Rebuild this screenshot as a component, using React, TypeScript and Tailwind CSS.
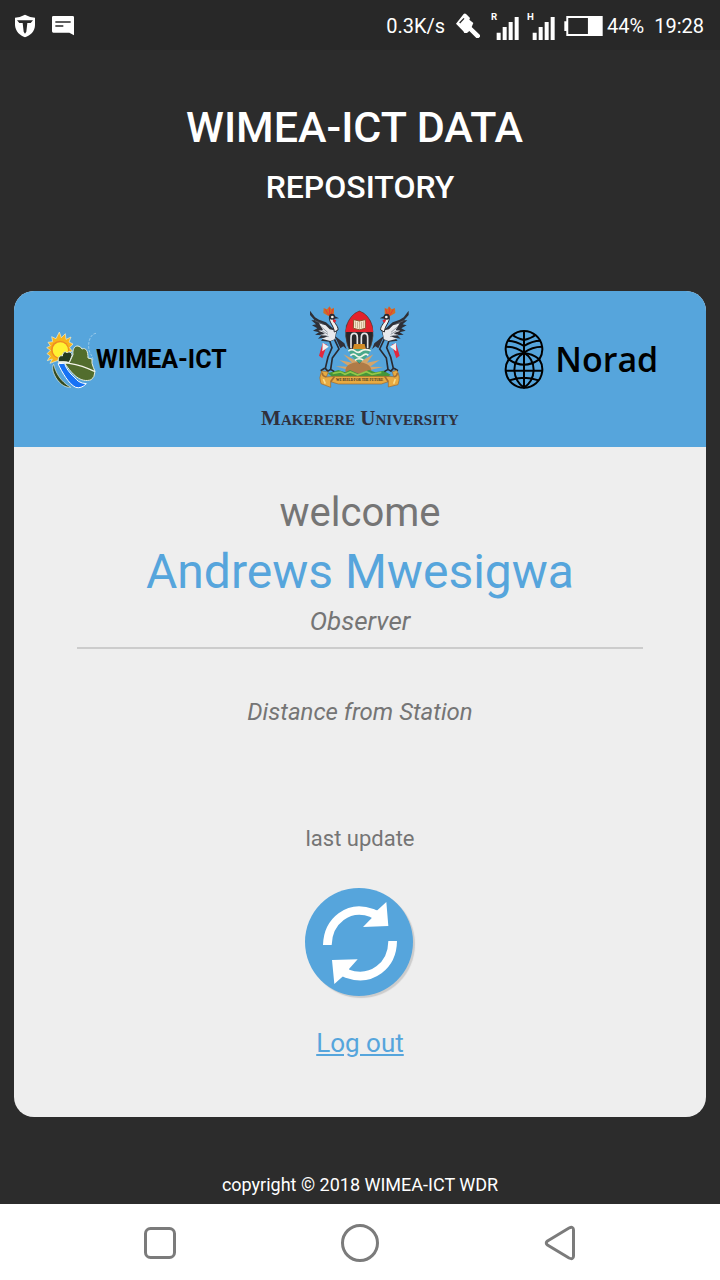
import React from "react";

function StatusBar() {
  return (
    <header className="flex h-[50px] items-center justify-between bg-[#282828] pl-[14px] pr-4 pt-0.5 text-[20px] leading-6 text-white">
      <div className="flex items-center gap-4">
        <svg viewBox="42 39 66 72" className="h-6 w-[22px]" aria-hidden="true">
          <path d="M75 41Q61 49 45 50V72C46 91 60 104 75 109C91 104 105 91 105 72V50Q89 49 75 41Z" fill="#fff" />
          <path d="M51 58H99L92 66H82L79 92L75 98L71 92L68 66H58Z" fill="#282828" />
        </svg>
        <svg viewBox="156 48 66 60" className="h-5 w-[22px]" aria-hidden="true">
          <path d="M160 48H218Q222 48 222 52V106L208 98H160Q156 98 156 94V52Q156 48 160 48Z" fill="#fff" />
          <path d="M166 66H212M166 78H190" stroke="#282828" strokeWidth="5" />
        </svg>
      </div>
      <div className="flex items-center">
        <span>0.3K/s</span>
        <svg viewBox="228 36 72 78" className="ml-[11px] h-[26px] w-6" aria-hidden="true">
          <path d="M228 68L251 39Q255 36 259 40L270 51L268 56L280 66L275 78L300 102V107L296 111H289L268 90L261 96H253L250 91Z" fill="#fff" />
          <path d="M239 66L252 52" stroke="#282828" strokeWidth="4" />
        </svg>
        <div className="ml-[11px] flex gap-2">
          <Signal label="R" />
          <Signal label="H" />
        </div>
        <svg viewBox="555 44 117 61" className="ml-[9px] mr-1 h-5 w-[39px]" aria-hidden="true">
          <path d="M555 60H561V44H672V105H561V90H555ZM567 50V99H627V50Z" fill="#fff" fillRule="evenodd" />
        </svg>
        <span>44%</span>
        <span className="ml-[10px]">19:28</span>
      </div>
    </header>
  );
}

function Signal({ label }: { label: string }) {
  return (
    <svg viewBox="334 30 84 84" className="size-7" aria-hidden="true">
      <text x="334" y="54" fontSize="29" fontWeight="700" fill="#fff">{label}</text>
      <path d="M351 92h12v22h-12zM369 75h12v39h-12zM387 60h12v54h-12zM405 45h12v69h-12z" fill="#fff" />
    </svg>
  );
}

function WimeaLogo() {
  return (
    <div className="flex items-center">
      <svg viewBox="48 33 156 177" className="-mr-0.5 h-[59px] w-[52px]" aria-hidden="true">
        <path
          d="M88 36L94 53L106 41L108 58L123 51L117 66L129 72L119 83L127 94L114 96L114 110L60 130L67 117L52 122L61 108L51 101L61 91L50 83L61 77L54 67L68 65L65 50L78 56Z"
          fill="#f7b51c"
          stroke="#f6f0cc"
          strokeWidth="2"
        />
        <circle cx="90" cy="89" r="27" fill="#ef8b22" />
        <circle cx="91" cy="90" r="23" fill="#fff233" />
        <path d="M71 133C77 158 91 184 122 202C103 204 83 186 74 166C68 154 66 140 71 133Z" fill="#31491f" stroke="#e8f0e0" strokeWidth="2" />
        <path d="M84 131L104 130C109 151 129 168 145 184Q157 191 169 191Q153 207 137 202C116 192 97 158 84 131Z" fill="#1772f5" stroke="#fff" strokeWidth="3" />
        <path d="M85 125C83 111 91 105 97 108C98 96 107 92 111 99C116 93 126 96 126 107L118 127Z" fill="#263b20" stroke="#e8f0e0" strokeWidth="3" />
        <path d="M118 128L129 104C127 89 133 77 144 78Q153 80 156 87C168 82 174 93 174 114L186 117Q184 130 190 142L195 154Q194 172 184 179C151 190 127 163 105 131Z" fill="#526d2d" stroke="#e8f0e0" strokeWidth="3" />
        <path d="M85 128Q103 123 118 130Q157 136 195 155" fill="none" stroke="#f4f5e9" strokeWidth="4" />
        <path d="M198 40C177 42 170 79 181 101Q187 108 189 119" fill="none" stroke="#bddcf0" strokeWidth="2" strokeDasharray="8 4" />
      </svg>
      <span className="text-[25px] font-bold leading-9 text-black">WIMEA-ICT</span>
    </div>
  );
}

function Crane() {
  return (
    <g>
      <path d="M83 136L72 173L82 181L96 140Z" fill="#e3283c" />
      <path d="M83 134L82 160L101 146Z" fill="#f3f2f1" />
      <path d="M103 125L111 149L99 177L91 211M117 121L132 153L112 180L107 214M89 211L77 218M91 211L99 220M107 214L96 221M107 214L118 221" fill="none" stroke="#292a31" strokeWidth="5" strokeLinejoin="round" />
      <path d="M117 112L148 136L155 154L145 145L136 151L125 127Z" fill="#303038" />
      <path d="M45 38L60 58L72 65L93 73L113 91L126 100L119 125L102 131L78 128L86 119L69 122L79 112L60 110L72 103L54 98L67 91L51 82L63 79L49 67L59 67L45 51Z" fill="#2e3037" />
      <path d="M72 76L92 82L104 94L124 98L119 124L106 129L80 122L99 115L75 111L90 106L70 98L84 96Z" fill="#e8eaed" />
      <path d="M77 85L98 103M77 96L99 109M79 109L101 116M60 68L85 79" stroke="#67717d" strokeWidth="2" />
      <path d="M106 52C95 67 117 81 118 102L129 96C131 82 112 73 116 58Z" fill="#f0f1ee" stroke="#292b32" strokeWidth="3" />
      <path d="M100 54L85 45L86 30L96 34L104 25L109 33L117 29L117 46L112 54Z" fill="#ce6f28" />
      <path d="M101 51L91 34M104 50L103 29M108 50L114 33" stroke="#ed3434" strokeWidth="3" />
      <circle cx="111" cy="56" r="9" fill="#2a2b32" />
      <circle cx="112" cy="57" r="4" fill="#f4f4ef" />
      <path d="M118 54L132 61L117 62Z" fill="#27282e" />
      <path d="M117 63L124 68L118 75L113 68Z" fill="#df2330" />
    </g>
  );
}

function UniversityCrest() {
  return (
    <svg viewBox="42 24 306 252" className="h-[84px] w-[102px]" aria-hidden="true">
      <path d="M190 224L122 205L164 206L133 186L171 194L145 169L181 187L168 160L190 181L206 166L205 186L235 169L216 194L254 186L225 206L264 207Z" fill="#d4a56a" />
      <ellipse cx="190" cy="218" rx="39" ry="26" fill="#af7b47" />
      <path d="M99 226L130 216L151 223L165 216L192 228L222 216L241 223L266 218L288 231L266 241H116Z" fill="#449639" />
      <path d="M113 226L137 222L150 229L166 222L188 231L214 221L231 229L259 223" fill="none" stroke="#93c849" strokeWidth="5" />
      <Crane />
      <g transform="translate(386 0) scale(-1 1)"><Crane /></g>
      <path d="M193 39Q222 49 232 84Q244 144 193 196Q142 145 154 83Q166 49 193 39Z" fill="#28272b" stroke="#554333" strokeWidth="2" />
      <path d="M193 40Q227 52 235 102H151Q160 52 193 40Z" fill="#e3222c" />
      <path d="M176 65L193 69L211 65V91L193 95L175 91Z" fill="#fff3d9" stroke="#8c542b" strokeWidth="3" />
      <path d="M193 69V93M181 70V89M187 71V90M199 71V90M205 70V89" stroke="#a27b58" strokeWidth="2" />
      <path d="M168 151V119C168 102 187 102 187 119V145M199 145V119C199 102 218 102 218 119V151" fill="none" stroke="#e4e4e5" strokeWidth="5" />
      <path d="M177 138H209L213 155H173Z" fill="#d38c26" />
      <path d="M158 153H229Q219 177 193 196Q168 177 158 153Z" fill="#48a88a" />
      <path d="M160 159Q171 151 180 159T199 159T227 158M166 173Q175 164 184 173T203 173T220 172M180 187Q190 178 205 186" fill="none" stroke="#f1f4e9" strokeWidth="5" />
      <path d="M80 219Q70 241 78 257L107 268L107 251L130 258H259L280 251V267L309 260Q318 235 305 217L292 221L296 236L267 235H121L94 237L100 222Z" fill="#e7ab43" stroke="#9c672d" strokeWidth="2" />
      <path d="M94 237Q81 235 82 224M296 236Q306 236 307 225M107 251L118 236M280 251L269 235" fill="none" stroke="#a36d32" strokeWidth="5" />
      <path d="M85 243L91 257M301 243L296 257" stroke="#f8dc8a" strokeWidth="5" />
      <text x="194" y="250" textAnchor="middle" fontSize="10" fontWeight="700" fontFamily="Liberation Serif" fill="#352a20">WE BUILD FOR THE FUTURE</text>
    </svg>
  );
}

function NoradLogo() {
  return (
    <div className="flex items-center gap-[11px]">
      <svg viewBox="42 27 120 180" className="h-[60px] w-10" aria-hidden="true">
        <g fill="none" stroke="#000" strokeWidth="6">
          <path d="M56 118A55 55 0 1 1 148 118Q102 150 56 118A55 55 0 1 0 148 118Q102 82 56 118" />
          <path d="M102 32V203M47 152H157M58 181Q102 165 146 181" />
          <path d="M102 98Q73 116 73 150Q75 184 102 203Q130 184 131 150Q131 116 102 98" />
          <path d="M67 44Q79 54 102 60Q125 54 137 44M52 62Q78 62 102 78Q126 62 152 62M48 80Q78 80 102 98Q126 80 156 80" />
        </g>
      </svg>
      <span className="font-['Open_Sans',sans-serif] text-[34px] font-semibold leading-10 text-black">Norad</span>
    </div>
  );
}

function NavigationBar() {
  return (
    <nav aria-label="System navigation" className="flex h-[76px] items-center justify-around bg-white px-[60px]">
      <button aria-label="Recent apps" className="flex size-12 items-center justify-center">
        <svg viewBox="0 0 40 40" className="size-10" fill="none" stroke="#7b7b7b" strokeWidth="3">
          <rect x="5.5" y="6.5" width="29" height="29" rx="5" />
        </svg>
      </button>
      <button aria-label="Home" className="flex size-12 items-center justify-center">
        <svg viewBox="0 0 40 40" className="size-10" fill="none" stroke="#7b7b7b" strokeWidth="3">
          <circle cx="20" cy="21" r="17.5" />
        </svg>
      </button>
      <button aria-label="Back" className="flex size-12 items-center justify-center">
        <svg viewBox="0 0 40 40" className="size-10" fill="none" stroke="#7b7b7b" strokeWidth="3">
          <path d="M7.5 19L29 6Q33.5 4 33.5 8V34Q33.5 38 29 36L7.5 23Q5 21 7.5 19Z" />
        </svg>
      </button>
    </nav>
  );
}

export default function App() {
  return (
    <div className="flex min-h-screen flex-col bg-[#2c2c2c] font-['Roboto',sans-serif]">
      <StatusBar />
      <main className="flex flex-1 flex-col px-[14px] text-center">
        <h1 className="pb-[84px] pt-[52px] font-medium text-white">
          <span className="block pr-[11px] text-[43px] leading-[50px]">WIMEA-ICT DATA</span>
          <span className="mt-[15px] block text-[32px] leading-10">REPOSITORY</span>
        </h1>
        <section className="overflow-hidden rounded-[20px] bg-[#eeeeee] text-[#757575]">
          <div className="grid h-[156px] grid-cols-3 bg-[#56a5dc]">
            <div className="flex items-center justify-end pb-[18px] pr-[18px]"><WimeaLogo /></div>
            <div className="flex flex-col items-center pt-[15px]">
              <UniversityCrest />
              <span className="mt-4 whitespace-nowrap font-['Liberation_Serif',serif] text-[21px] font-bold leading-6 text-[#30303c] [font-variant:small-caps]">Makerere University</span>
            </div>
            <div className="flex items-center pb-5 pl-[29px]"><NoradLogo /></div>
          </div>
          <div className="flex flex-col items-center px-[63px] pb-[58px] pt-[42px]">
            <p className="text-[40px] leading-[48px]">welcome</p>
            <h2 className="mt-[7px] text-[48px] leading-[56px] text-[#56a5dc]">Andrews Mwesigwa</h2>
            <p className="mt-[5px] w-full border-b-2 border-[#cccccc] pb-[10px] text-[26px] italic leading-8">Observer</p>
            <p className="mt-[47px] text-[24px] italic leading-8">Distance from Station</p>
            <p className="mt-[95px] text-[22px] leading-8">last update</p>
            <button aria-label="Refresh" className="mr-[2px] mt-[33px] size-[108px] rounded-full bg-[#56a5dc] shadow-[2px_2px_1px_#cccccc]">
              <svg viewBox="45 39 324 324" className="size-full" aria-hidden="true">
                <g fill="none" stroke="#fff" strokeWidth="26">
                  <path d="M112 210C114 137 176 88 246 114L258 120" />
                  <path d="M308 198C307 272 245 322 171 296L158 290" />
                </g>
                <path d="M289 81L295 153L219 156L246 128L240 111L262 106ZM126 255L203 253L177 282L183 298L159 304L133 327Z" fill="#fff" />
              </svg>
            </button>
            <a href="#logout" className="mt-[31px] text-[26px] leading-8 text-[#56a5dc] underline">Log out</a>
          </div>
        </section>
        <footer className="mt-auto pb-[7px] pt-8 text-[18px] leading-6 text-white">copyright © 2018 WIMEA-ICT WDR</footer>
      </main>
      <NavigationBar />
    </div>
  );
}
